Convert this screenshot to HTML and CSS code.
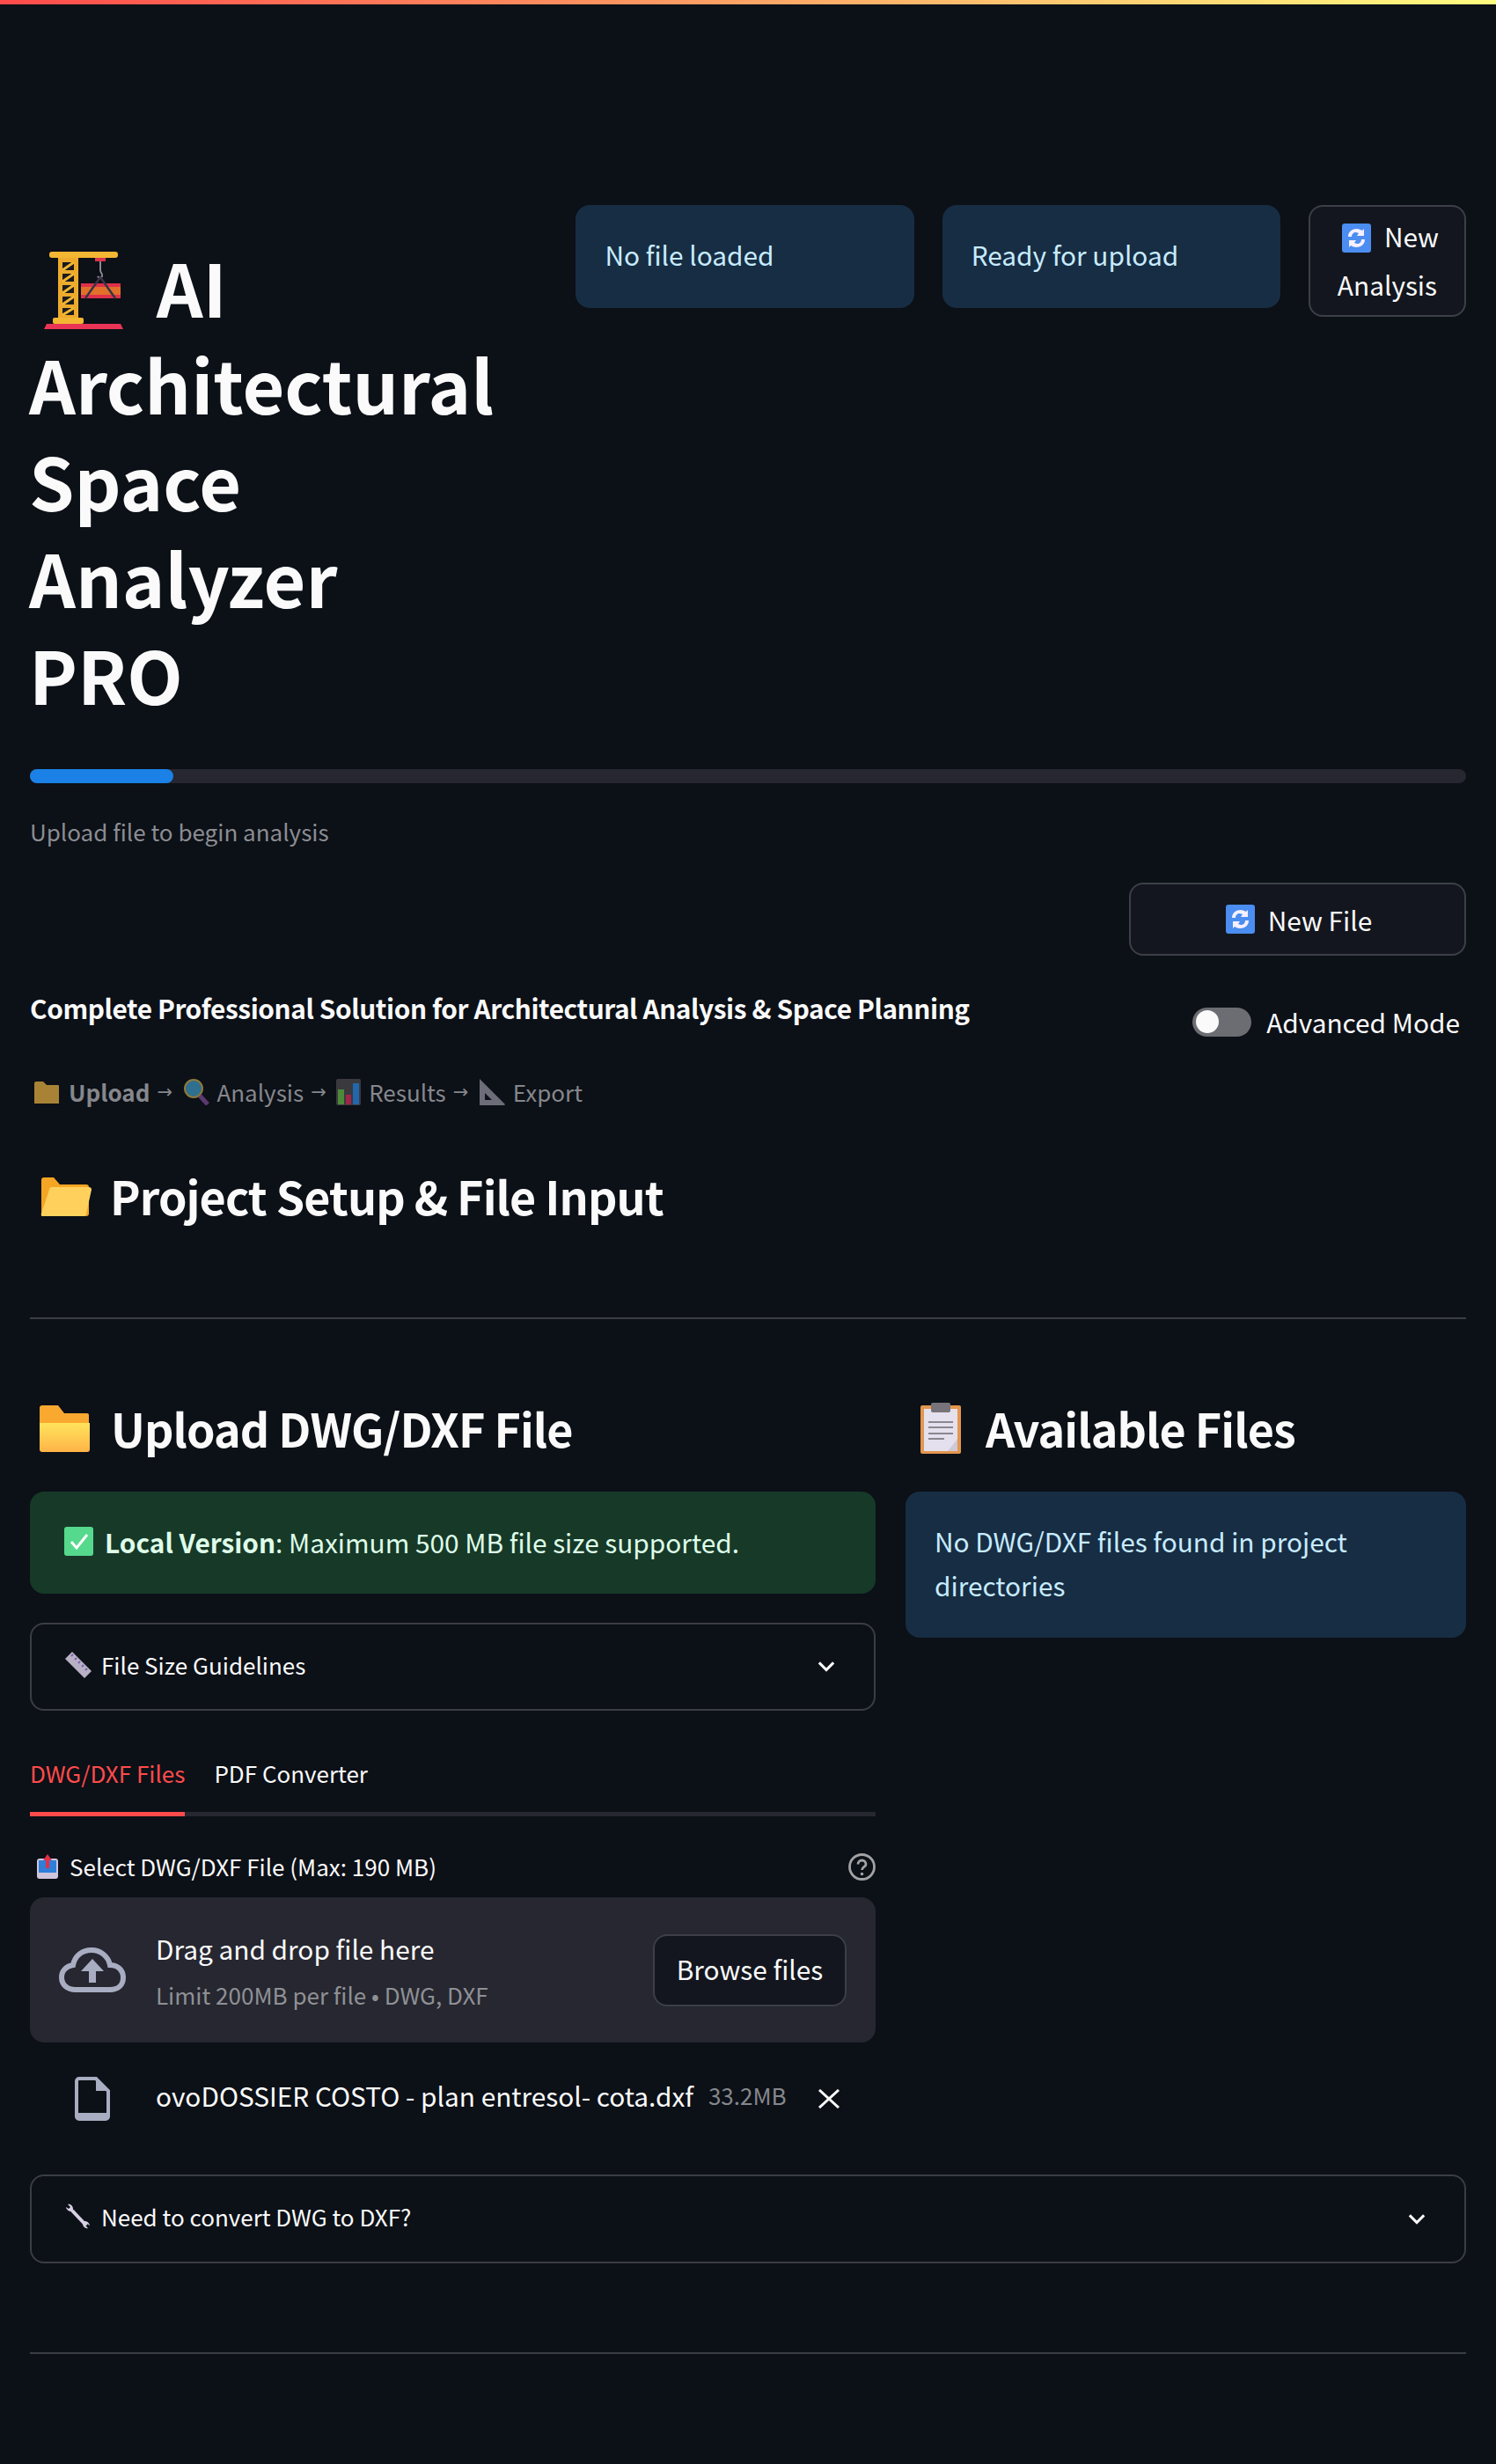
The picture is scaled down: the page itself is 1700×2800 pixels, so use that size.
FILE: index.html
```html
<!DOCTYPE html>
<html lang="en">
<head>
<meta charset="utf-8">
<title>AI Architectural Space Analyzer PRO</title>
<link rel="stylesheet" href="styles.css">
</head>
<body>
<div class="decoration"></div>
<main class="main">
  <section class="header">
    <h1 class="title"><svg class="crane" viewBox="0 0 90 88"><rect x="6" y="0" width="78" height="7" rx="3" fill="#f2b632"/><rect x="16" y="7" width="23" height="68" fill="#eeaa2c"/><path d="M21 12h13v9H21zM21 25h13v9H21zM21 38h13v9H21zM21 51h13v9H21zM21 64h13v8H21z" fill="#1a1a1e"/><path d="M21 21l13-9M21 34l13-9M21 47l13-9M21 60l13-9M21 72l13-8" stroke="#f2b632" stroke-width="3"/><rect x="10" y="75" width="35" height="7" rx="2" fill="#f2b632"/><path d="M3 82h84l3 6H0z" fill="#ea3456"/><rect x="58" y="7" width="12" height="4" fill="#d8344e"/><path d="M64 11v10c0 3 3 4 2 7-1 2-4 2-5 0" fill="none" stroke="#8b8790" stroke-width="2"/><rect x="42" y="37" width="45" height="15" fill="#e2702a"/><rect x="42" y="36" width="45" height="4" fill="#e0304a"/><rect x="42" y="49" width="45" height="4" fill="#e0304a"/><path d="M64 29L47 53M64 29L81 53" fill="none" stroke="#3a3346" stroke-width="2.5"/></svg> AI Architectural Space Analyzer PRO</h1>
    <div class="alert info status">No file loaded</div>
    <div class="alert info status">Ready for upload</div>
    <button class="btn btn-top"><svg class="refresh" viewBox="0 0 33 33"><rect width="33" height="33" rx="3" fill="#4b8df0"/><path d="M7 15C7 9 12 6 17 6c2 0 4 1 6 2l2-2v8h-8l2-3c-1 0-2-1-3-1-3 0-5 2-5 5zM26 18c0 6-5 9-10 9-2 0-4-1-6-2l-2 2v-8h8l-2 3c1 0 2 1 3 1 3 0 5-2 5-5z" fill="#f5f0ff"/></svg><span class="btn-gap">New</span> Analysis</button>
  </section>

  <div class="progress"><div class="progress-fill"></div></div>
  <p class="caption">Upload file to begin analysis</p>

  <div class="toolbar">
    <button class="btn btn-wide"><svg class="refresh" viewBox="0 0 33 33"><rect width="33" height="33" rx="3" fill="#4b8df0"/><path d="M7 15C7 9 12 6 17 6c2 0 4 1 6 2l2-2v8h-8l2-3c-1 0-2-1-3-1-3 0-5 2-5 5zM26 18c0 6-5 9-10 9-2 0-4-1-6-2l-2 2v-8h8l-2 3c1 0 2 1 3 1 3 0 5-2 5-5z" fill="#f5f0ff"/></svg><span>New File</span></button>
  </div>
  <div class="tagline-row">
    <p class="tagline">Complete Professional Solution for Architectural Analysis &amp; Space Planning</p>
    <label class="toggle"><span class="toggle-track"><span class="toggle-knob"></span></span><span>Advanced Mode</span></label>
  </div>

  <p class="steps">
    <svg class="step-icon" viewBox="0 0 30 30"><path d="M1 5a2 2 0 012-2h8l4 4h13a1 1 0 011 1v20H1z" fill="#a88336"/></svg><b>Upload</b><span class="arrow">→</span>
    <svg class="step-icon icon-mag" viewBox="0 0 32 30"><circle cx="13" cy="11" r="10" fill="#2f6f8f" stroke="#8f7a3a" stroke-width="2"/><path d="M20 19l9 10" stroke="#5a3a6e" stroke-width="5"/></svg><span>Analysis</span><span class="arrow">→</span>
    <svg class="step-icon icon-chart" viewBox="0 0 28 30"><rect width="28" height="30" rx="2" fill="#3a3a3e"/><rect x="2" y="12" width="7" height="17" fill="#4c8a3a"/><rect x="11" y="18" width="6" height="11" fill="#a02648"/><rect x="19" y="5" width="7" height="24" fill="#2267ad"/></svg><span>Results</span><span class="arrow">→</span>
    <svg class="step-icon" viewBox="0 0 30 30"><path fill-rule="evenodd" d="M1 0l29 29-1 1H1zM7 16v8h8z" fill="#6c6d78"/></svg><span>Export</span>
  </p>

  <h3 class="heading heading-top"><svg class="ic-open" viewBox="0 0 58 45"><path d="M1 4a3 3 0 013-3h11l7 8h30a3 3 0 013 3v30a3 3 0 01-3 3H1z" fill="#f5a524"/><path d="M10 15a3 3 0 013-3h42a3 3 0 013 3l-6 27a3 3 0 01-3 3H3a2 2 0 01-2-3z" fill="#ffd15c"/></svg><span>Project Setup &amp; File Input</span></h3>

  <hr class="rule rule-one">

  <section class="columns">
    <div class="col">
      <h3 class="heading"><svg class="ic-folder" viewBox="0 0 58 53"><defs><linearGradient id="fg" x1="0" y1="0" x2="0" y2="1"><stop offset="0" stop-color="#ffe45c"/><stop offset="1" stop-color="#ffb347"/></linearGradient></defs><path d="M1 3a3 3 0 013-3h18l7 9h26a2 2 0 012 2v10H1z" fill="#f9a830"/><path d="M1 20h57v30a3 3 0 01-3 3H4a3 3 0 01-3-3z" fill="url(#fg)"/></svg><span>Upload DWG/DXF File</span></h3>
      <div class="alert success"><svg class="check" viewBox="0 0 33 33"><rect width="33" height="33" rx="3" fill="#55d98d"/><path d="M8 17l6 7L26 9" fill="none" stroke="#fff" stroke-width="3"/></svg><span><b>Local Version</b>: Maximum 500 MB file size supported.</span></div>
      <div class="expander exp-small"><span class="exp-label"><svg class="ic-ruler" viewBox="0 0 30 30"><path d="M8 0l22 22-8 8L0 8z" fill="#b8b0c4"/><path d="M9 3l-2 2M13 7l-2 2M17 11l-2 2M21 15l-2 2M25 19l-2 2" stroke="#7d5fb0" stroke-width="2"/></svg>File Size Guidelines</span><svg class="chev" viewBox="0 0 24 24"><path d="M5 8l7 7 7-7" fill="none" stroke="#fafafa" stroke-width="2.6"/></svg></div>

      <div class="tabs"><span class="tab tab-active">DWG/DXF Files</span><span class="tab">PDF Converter</span></div>

      <div class="label-row"><span class="label"><svg class="ic-inbox" viewBox="0 0 24 28"><rect y="5" width="24" height="23" rx="3" fill="#cfc6dc"/><rect x="2" y="7" width="20" height="14" fill="#2f7fd8"/><path d="M12 0l5 7h-3v9h-4V7H7z" fill="#e0304a"/></svg>Select DWG/DXF File (Max: 190 MB)</span><svg class="help" viewBox="0 0 31 31"><circle cx="15.5" cy="15.5" r="14" fill="none" stroke="#a3a3a6" stroke-width="2.8"/><path d="M11 12.5a4.5 4.5 0 119 0c0 3-4.500 3-4.500 6.500" fill="none" stroke="#a3a3a6" stroke-width="2.800"/><circle cx="15.500" cy="23.500" r="1.800" fill="#a3a3a6"/></svg></div>

      <div class="dropzone">
        <svg class="cloud" viewBox="0 0 76 51"><path d="M19 48C9 48 3 42 3 34c0-8 6-13 13-14C18 9 27 3 37 3c10 0 19 7 21 17 9 0 15 6 15 14 0 9-6 14-15 14z" fill="none" stroke="#a9adc2" stroke-width="6"/><path d="M38 13L25 27h9v13h8V27h9z" fill="#a9adc2"/></svg>
        <div class="drop-text"><div class="drop-title">Drag and drop file here</div><div class="drop-sub">Limit 200MB per file • DWG, DXF</div></div>
        <button class="btn btn-browse">Browse files</button>
      </div>

      <div class="file-row">
        <svg class="ic-file" viewBox="0 0 40 50"><path d="M5 2h19l14 14v29a3 3 0 01-3 3H5a3 3 0 01-3-3V5a3 3 0 013-3z" fill="none" stroke="#a9adc2" stroke-width="4"/><path d="M24 2v14h14z" fill="#a9adc2"/><rect x="2" y="41" width="36" height="7" fill="#a9adc2"/></svg>
        <span class="file-name">ovoDOSSIER COSTO - plan entresol- cota.dxf</span><span class="file-size">33.2MB</span>
        <svg class="close" viewBox="0 0 26 22"><path d="M2 1l22 20M24 1L2 21" stroke="#fafafa" stroke-width="3"/></svg>
      </div>
    </div>
    <div class="col">
      <h3 class="heading heading-alt"><svg class="ic-clip" viewBox="0 0 46 58"><rect y="3" width="46" height="55" rx="2" fill="#e3964f"/><rect x="4" y="7" width="38" height="48" fill="#e5e0ee"/><path d="M31 55l11-14v14z" fill="#cfc8d6"/><rect x="12" y="0" width="22" height="11" rx="2" fill="#77737a"/><path d="M9 22h28M9 28h28M9 35h28M9 41h18" stroke="#8b8790" stroke-width="2"/></svg><span>Available Files</span></h3>
      <div class="alert info">No DWG/DXF files found in project directories</div>
    </div>
  </section>

  <div class="expander exp-full"><span class="exp-label"><svg class="ic-wrench" viewBox="0 0 29 29"><path d="M8 8l16 17" stroke="#d8d0e4" stroke-width="4"/><path d="M3 1c3-1 6 2 6 5s-1 3-3 3-5-3-5-5l3 2 2-2zM26 28c-3 1-6-2-6-5s1-3 3-3 5 3 5 5l-3-2-2 2z" fill="#d8d0e4"/></svg>Need to convert DWG to DXF?</span><svg class="chev" viewBox="0 0 24 24"><path d="M5 8l7 7 7-7" fill="none" stroke="#fafafa" stroke-width="2.6"/></svg></div>

  <hr class="rule rule-two">
</main>
</body>
</html>
```

FILE: styles.css
```css
* { box-sizing: border-box; }
html, body { margin: 0; padding: 0; }
body {
  background: #0c1017;
  color: #fafafa;
  font-family: "Noto Sans CJK JP", "Noto Sans", sans-serif;
  font-size: 29.8px;
  line-height: 50px;
  height: 2800px;
  overflow: hidden;
}
p, h1, h3 { margin: 0; }
svg { display: block; flex: none; }
.decoration { height: 5px; background: linear-gradient(90deg, #ff4b4b, #fffd80); }
.main { padding: 228px 34px 0; }

.header {
  display: grid;
  grid-template-columns: 588fr 384fr 384fr 179fr;
  column-gap: 32px;
  align-items: start;
}
.title { font-size: 82.5px; line-height: 110px; font-weight: 700; padding-top: 37px; max-width: 540px; margin-left: -1px; }
.crane { display: inline-block; width: 90px; height: 88px; margin: 0 19px 0 17px; vertical-align: -13px; }

.alert { border-radius: 16px; padding: 31px 33px; }
.info { background: #172d43; color: #c7ebff; }
.status { height: 117px; }
.success { background: #173928; color: #dffde9; display: flex; align-items: center; height: 116px; padding: 0 39px 3px; gap: 13px; }
.check { width: 33px; height: 33px; }

.btn {
  font: inherit;
  color: #fafafa;
  background: #13161e;
  border: 2px solid #3c3f47;
  border-radius: 16px;
}
.btn-top { height: 127px; padding: 0 16px 1px; line-height: 55px; text-align: center; }
.btn-top .refresh { display: inline-block; vertical-align: -6px; margin-left: 7px; }
.btn-gap { margin-left: 15px; }
.refresh { width: 33px; height: 33px; }
.btn-wide { width: 383px; height: 83px; display: flex; align-items: center; justify-content: center; gap: 15px; padding-left: 9px; }

.progress { height: 16px; background: #262730; border-radius: 8px; margin-top: 54px; }
.progress-fill { width: 10%; height: 100%; background: #1b81e6; border-radius: 8px; }
.caption { font-size: 26px; color: #8b8d92; margin-top: 30px; line-height: 50px; }

.toolbar { display: flex; justify-content: flex-end; margin-top: 33px; }
.tagline-row { display: flex; justify-content: space-between; align-items: flex-start; margin-top: 34px; }
.tagline { font-weight: 700; letter-spacing: -0.4px; }
.toggle { display: flex; align-items: center; gap: 17px; padding: 0 7px 0 0; margin-top: 16px; }
.toggle-track { width: 67px; height: 33px; border-radius: 17px; background: #6c6d72; display: flex; align-items: center; padding-left: 4px; }
.toggle-knob { width: 26px; height: 26px; border-radius: 50%; background: #fafafa; }

.steps { display: flex; align-items: center; font-size: 26px; color: #85878c; margin-top: 30px; height: 50px; }
.steps b { margin-left: 10px; }
.steps span:not(.arrow) { margin-left: 9px; }
.steps .icon-mag + span { margin-left: 7px; }
.step-icon { width: 30px; height: 30px; margin-left: 4px; }
.icon-mag { width: 32px; }
.icon-chart { width: 28px; }
.arrow { margin: 0 8px; width: 17px; font-family: "DejaVu Sans", sans-serif; font-size: 21px; }

.heading { display: flex; align-items: center; font-size: 52px; line-height: 80px; font-weight: 700; letter-spacing: -0.9px; }
.heading-top { margin-top: 53px; padding-left: 12px; gap: 21px; }
.ic-open { width: 58px; height: 45px; }
.rule { border: 0; height: 2px; background: #3b3d45; margin: 0; }
.rule-one { margin-top: 98px; }

.columns { display: grid; grid-template-columns: 961fr 637fr; column-gap: 34px; margin-top: 84px; align-items: start; }
.col > .heading { padding-left: 10px; gap: 24px; height: 80px; }
.col > .heading-alt { padding-left: 17px; gap: 28px; }
.ic-folder { width: 58px; height: 53px; }
.ic-clip { width: 46px; height: 58px; }
.col > .alert { margin-top: 32px; }
.col > .info { height: 166px; }

.expander { display: flex; justify-content: space-between; align-items: center; border: 2px solid #3b3d45; border-radius: 16px; font-size: 26px; padding: 0 40px 0 38px; height: 100px; }
.exp-label { display: flex; align-items: center; margin-top: -4px; }
.exp-small { margin-top: 33px; }
.ic-ruler { width: 30px; height: 30px; margin-right: 11px; }
.ic-wrench { width: 29px; height: 29px; margin-right: 12px; }
.chev { width: 28px; height: 28px; }

.tabs { display: flex; gap: 33px; margin-top: 42px; border-bottom: 5px solid #262730; height: 78px; font-size: 26px; }
.tab { height: 78px; padding-top: 4px; }
.tab-active { color: #ff4b4b; border-bottom: 5px solid #ff4b4b; }

.label-row { display: flex; justify-content: space-between; align-items: center; margin-top: 41px; height: 32px; font-size: 26px; }
.label { display: flex; align-items: center; gap: 13px; padding-left: 8px; }
.ic-inbox { width: 24px; height: 28px; }
.help { width: 31px; height: 31px; }

.dropzone { display: flex; align-items: center; background: #262730; border-radius: 16px; margin-top: 19px; height: 165px; padding: 0 33px; }
.cloud { width: 76px; height: 51px; }
.drop-text { flex: 1; margin-left: 34px; padding-top: 4px; }
.drop-title { line-height: 52px; }
.drop-sub { font-size: 26px; color: #8f9095; line-height: 53px; }
.btn-browse { width: 220px; height: 82px; padding-bottom: 4px; }

.file-row { display: flex; align-items: center; height: 92px; margin-top: 18px; padding-left: 51px; white-space: nowrap; }
.ic-file { width: 40px; height: 50px; margin-right: 52px; }
.file-name { margin-top: -9px; }
.file-size { font-size: 26px; color: #85878c; margin-left: 17px; margin-top: -9px; }
.close { width: 26px; height: 22px; margin-left: 35px; }

.exp-full { margin-top: 40px; height: 101px; }
.exp-full .exp-label { margin-top: -6px; }
.rule-two { margin-top: 101px; }
```
